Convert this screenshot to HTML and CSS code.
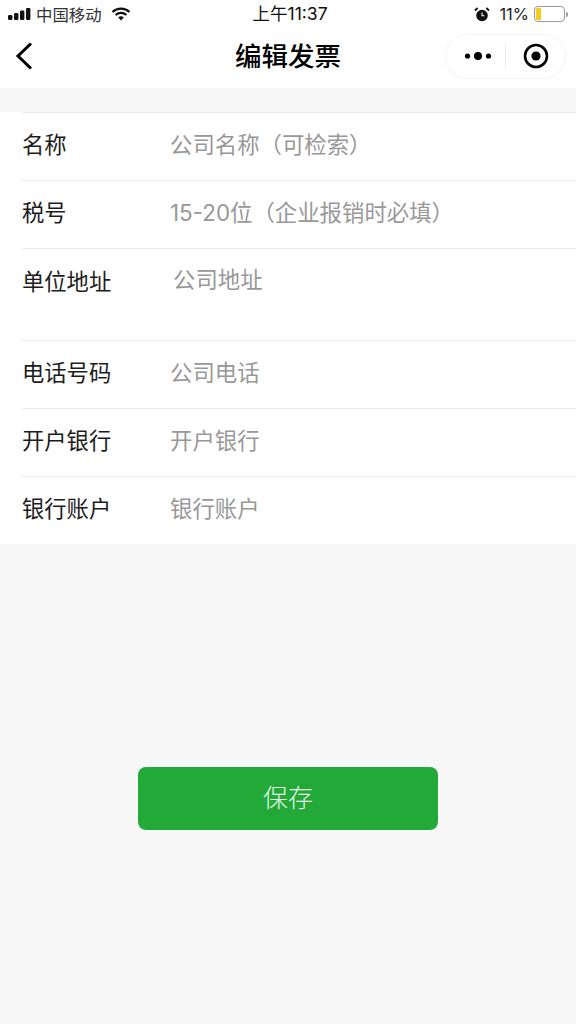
FILE: index.html
```html
<!DOCTYPE html>
<html lang="zh">
<head>
<meta charset="utf-8">
<title>编辑发票</title>
<link rel="stylesheet" href="styles.css">
</head>
<body>
<div class="page">
  <header class="head">
    <div class="status">
      <div class="status-side">
        <svg class="signal" width="23" height="12" viewBox="0 0 23 12"><rect x="0" y="7" width="4.4" height="5" rx="1.2"/><rect x="6" y="5" width="4.4" height="7" rx="1.2"/><rect x="12" y="2.5" width="4.4" height="9.5" rx="1.2"/><rect x="18" y="0" width="4.4" height="12" rx="1.2"/></svg>
        <span class="carrier">中国移动</span>
        <svg class="wifi" width="20" height="14" viewBox="0 0 20 14"><path d="M1.5 5a12.5 12.5 0 0 1 17 0M4.6 8a8 8 0 0 1 10.8 0" fill="none" stroke="#111" stroke-width="2.3"/><path d="M7.2 10.6a4 4 0 0 1 5.6 0L10 13.6z" fill="#111"/></svg>
      </div>
      <div class="clock">上午11:37</div>
      <div class="status-side status-right">
        <svg class="alarm" width="16" height="15" viewBox="0 0 16 15"><circle cx="8" cy="8.5" r="5.8" fill="#111"/><path d="M8 5.5v3.3h2.4" stroke="#fff" stroke-width="1.1" fill="none"/><path d="M1 3.5 3.6 1M15 3.5 12.4 1" stroke="#111" stroke-width="1.8"/></svg>
        <span class="percent">11%</span>
        <div class="battery"><div class="battery-level"></div></div>
        <div class="battery-tip"></div>
      </div>
    </div>
    <div class="nav">
      <svg class="back" width="20" height="30" viewBox="0 0 20 30"><path d="M17 2.5 4 15l13 12.5" fill="none" stroke="#000" stroke-width="3"/></svg>
      <h1 class="title">编辑发票</h1>
      <div class="capsule">
        <svg class="dots" width="28" height="10" viewBox="0 0 28 10"><circle cx="3.5" cy="5" r="2.6"/><circle cx="14" cy="5" r="4"/><circle cx="24.5" cy="5" r="2.6"/></svg>
        <span class="capsule-line"></span>
        <svg class="target" width="26" height="26" viewBox="0 0 26 26"><circle cx="13" cy="13" r="11" fill="none" stroke="#000" stroke-width="2.6"/><circle cx="13" cy="13" r="4.6"/></svg>
      </div>
    </div>
  </header>
  <main class="form">
    <div class="row"><span class="label">名称</span><span class="hint">公司名称（可检索）</span></div>
    <div class="row"><span class="label">税号</span><span class="hint">15-20位（企业报销时必填）</span></div>
    <div class="row row-tall"><span class="label">单位地址</span><span class="hint hint-addr">公司地址</span></div>
    <div class="row"><span class="label">电话号码</span><span class="hint">公司电话</span></div>
    <div class="row"><span class="label">开户银行</span><span class="hint">开户银行</span></div>
    <div class="row"><span class="label">银行账户</span><span class="hint">银行账户</span></div>
  </main>
  <div class="actions"><div class="save">保存</div></div>
</div>
</body>
</html>
```
FILE: styles.css
```css
* { box-sizing: border-box; }
html, body { margin: 0; padding: 0; }
body {
  width: 576px;
  height: 1024px;
  overflow: hidden;
  background: #f7f7f7;
  font-family: "Noto Sans CJK SC", "Liberation Sans", sans-serif;
  color: #111;
}
.head { height: 88px; background: #fff; }
.status {
  height: 28px;
  display: grid;
  grid-template-columns: 1fr auto 1fr;
  align-items: center;
  padding: 0 8px 0 8px;
}
.status-side { display: flex; align-items: center; }
.status-right { justify-content: flex-end; }
.signal { fill: #111; margin-right: 5px; }
.carrier { font-size: 16.4px; line-height: 20px; color: #333; }
.wifi { margin-left: 9px; }
.clock { font-family: "Inter", "Noto Sans CJK SC", sans-serif; font-size: 17.6px; line-height: 20px; margin-left: 4px; color: #111; }
.alarm { margin-right: 9px; }
.percent { font-family: "Inter", sans-serif; font-size: 16.5px; margin-right: 5px; color: #222; }
.battery {
  width: 31px;
  height: 16px;
  border: 1px solid #999;
  border-radius: 4px;
  padding: 1px;
}
.battery-level { width: 5px; height: 100%; background: #f5cb1c; border-radius: 1px; }
.battery-tip { width: 2px; height: 5px; background: #999; margin-left: 1px; border-radius: 0 2px 2px 0; }
.nav {
  height: 60px;
  padding: 0 10px 4px 14px;
  display: flex;
  align-items: center;
  justify-content: space-between;
  position: relative;
}
.title {
  position: absolute;
  left: 0;
  right: 0;
  top: 7px;
  margin: 0;
  text-align: center;
  font-size: 26.5px;
  line-height: 40px;
  font-weight: 500;
  color: #000;
}
.capsule {
  width: 121px;
  height: 45px;
  border: 1px solid #f3f3f3;
  border-radius: 23px;
  background: #fff;
  display: flex;
  align-items: center;
  padding-left: 18px;
  position: relative;
}
.dots { fill: #000; }
.capsule-line { width: 1px; height: 26px; background: #ececec; margin: 0 17px 0 13px; }
.form { margin-top: 24px; background: #fff; height: 432px; }
.row {
  height: 68px;
  margin-left: 22px;
  padding-bottom: 8px;
  border-top: 1px solid #ebebeb;
  display: flex;
  align-items: center;
}
.row-tall { height: 92px; align-items: flex-start; padding-top: 14px; padding-bottom: 0; }
.label { width: 148px; font-size: 22.3px; line-height: 34px; color: #1c1c1c; }
.hint { font-family: "Inter", "Noto Sans CJK SC", sans-serif; font-size: 22.4px; line-height: 34px; margin-top: 4px; color: #989898; }
.hint-addr { margin-left: 3px; margin-top: 0; }
.actions { padding: 223px 0 0 138px; }
.save {
  width: 300px;
  height: 63px;
  padding-bottom: 5px;
  background: #22a938;
  border-radius: 8px;
  color: #e6f6e9;
  font-size: 25px;
  font-weight: 300;
  display: flex;
  align-items: center;
  justify-content: center;
}
```
